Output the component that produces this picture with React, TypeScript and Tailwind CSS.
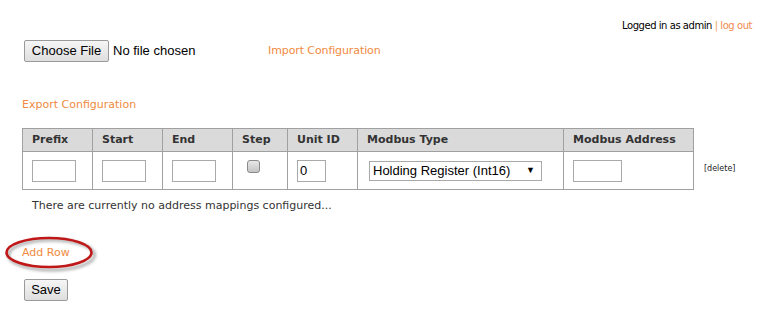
import React from "react";

const tahoma = "font-['DejaVu_Sans',sans-serif]";
const arial = "font-['Liberation_Sans',Arial,sans-serif]";

function TextInput({ value = "", w = 44 }: { value?: string; w?: number }) {
  return (
    <div
      className={`h-[22px] border border-[#a9a9a9] bg-white ${arial} text-[13px] leading-[20px] text-black pl-[2px]`}
      style={{ width: w }}
    >
      {value}
    </div>
  );
}

export default function App() {
  const cols = [
    { label: "Prefix", w: 70 },
    { label: "Start", w: 70 },
    { label: "End", w: 70 },
    { label: "Step", w: 55 },
    { label: "Unit ID", w: 70 },
    { label: "Modbus Type", w: 206 },
    { label: "Modbus Address", w: 130 },
  ];
  return (
    <div className={`w-[767px] h-[321px] bg-white overflow-hidden ${tahoma} text-[#333]`}>
      <div className="h-[40px] flex justify-end pr-[15px] pt-[19px]">
        <div className="text-[10px] leading-[14px] text-black tracking-[-0.45px]">
          Logged in as admin <span className="text-[#f0a060]">|</span>{" "}
          <span className="text-[#f08a50]">log out</span>
        </div>
      </div>

      <div className="h-[22px] flex items-center pl-[24px]">
        <div
          className={`h-[22px] w-[85px] flex items-center justify-center border border-[#9a9a9a] rounded-[2px] bg-gradient-to-b from-[#f6f6f6] to-[#dedede] ${arial} text-[13px] text-black`}
        >
          Choose File
        </div>
        <div className={`ml-[4px] ${arial} text-[13px] text-black w-[155px]`}>No file chosen</div>
        <div className="text-[11px] text-[#f08a3e] tracking-[-0.1px]">Import Configuration</div>
      </div>

      <div className="mt-[36px] h-[14px] pl-[22px] text-[11px] leading-[14px] text-[#f08a3e]">
        Export Configuration
      </div>

      <div className="mt-[16px] ml-[22px] flex items-start">
        <table className="border-collapse table-fixed w-[671px]">
          <colgroup>
            {cols.map((c) => (
              <col key={c.label} style={{ width: c.w }} />
            ))}
          </colgroup>
          <thead>
            <tr className="h-[23px] bg-[#dadada]">
              {cols.map((c) => (
                <th
                  key={c.label}
                  className="border border-[#a0a0a0] text-left pl-[9px] text-[11px] font-bold text-[#333] leading-[14px] p-0"
                >
                  {c.label}
                </th>
              ))}
            </tr>
          </thead>
          <tbody>
            <tr className="h-[38px]">
              <td className="border border-[#a0a0a0] pl-[9px] p-0">
                <TextInput />
              </td>
              <td className="border border-[#a0a0a0] pl-[9px] p-0">
                <TextInput />
              </td>
              <td className="border border-[#a0a0a0] pl-[9px] p-0">
                <TextInput />
              </td>
              <td className="border border-[#a0a0a0] p-0 align-top">
                <div className="ml-[14px] mt-[8px] w-[13px] h-[13px] rounded-[3px] border border-[#8a8a8a] bg-gradient-to-b from-[#e8e8e8] to-[#c4c4c4]" />
              </td>
              <td className="border border-[#a0a0a0] pl-[9px] p-0">
                <TextInput value="0" w={29} />
              </td>
              <td className="border border-[#a0a0a0] pl-[11px] p-0">
                <div
                  className={`w-[173px] h-[20px] border border-[#a9a9a9] bg-white flex items-center justify-between pl-[3px] pr-[6px] ${arial} text-[13px] text-black`}
                >
                  <span>Holding Register (Int16)</span>
                  <span className="text-[9px] leading-none">▼</span>
                </div>
              </td>
              <td className="border border-[#a0a0a0] pl-[9px] p-0">
                <TextInput w={49} />
              </td>
            </tr>
          </tbody>
        </table>
        <div className="ml-[10px] mt-[36px] text-[8px] leading-[10px] text-[#222]">[delete]</div>
      </div>

      <div className="mt-[9px] h-[14px] pl-[32px] text-[11px] leading-[14px] text-[#333]">
        There are currently no address mappings configured...
      </div>

      <div className="mt-[33px] h-[14px] pl-[22px] relative text-[11px] leading-[14px]">
        <span className="text-[#f08a3e]">Add Row</span>
        <svg
          className="absolute left-0 top-[-14px] pointer-events-none"
          width="110"
          height="46"
          viewBox="0 0 110 46"
        >
          <defs>
            <filter id="sh" x="-20%" y="-30%" width="140%" height="160%">
              <feGaussianBlur stdDeviation="1.6" />
            </filter>
          </defs>
          <ellipse cx="51.5" cy="23" rx="43" ry="15" fill="none" stroke="#9a9a9a" strokeWidth="3" filter="url(#sh)" opacity="0.8" />
          <ellipse cx="49" cy="20.5" rx="42.5" ry="14.5" fill="none" stroke="#c01818" strokeWidth="2.6" />
        </svg>
      </div>

      <div className="mt-[19px] pl-[24px]">
        <div
          className={`h-[22px] w-[44px] flex items-center justify-center border border-[#9a9a9a] rounded-[2px] bg-gradient-to-b from-[#f6f6f6] to-[#dedede] ${arial} text-[13px] text-black`}
        >
          Save
        </div>
      </div>
    </div>
  );
}
